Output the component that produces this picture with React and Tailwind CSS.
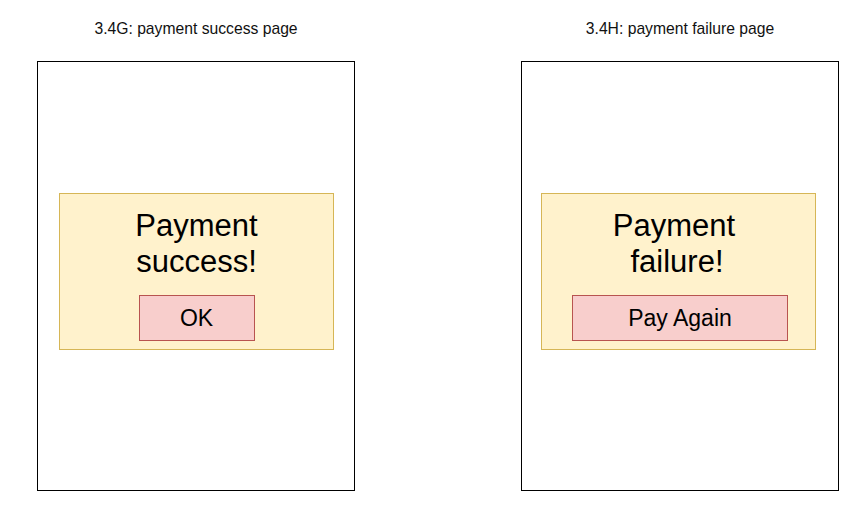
import React from 'react';

const font = { fontFamily: '"Liberation Sans", Arial, sans-serif' };

const Screen = ({ title, lines, action, padClass, buttonClass }) => (
  <div className="flex flex-col w-[318px]">
    <p className="mt-[20px] h-[18px] leading-[18px] text-[15.7px] text-[#111] text-center whitespace-nowrap">
      {title}
    </p>
    <div className={`mt-[23px] h-[430px] border border-black bg-white pt-[131px] ${padClass}`}>
      <div className="w-[275px] h-[157px] bg-[#fff2cc] border border-[#d6b656] flex flex-col items-center pt-[14px]">
        <div className="text-[31px] leading-[36px] text-black text-center">
          {lines.map(([text, cls]) => (
            <div key={text} className={cls}>{text}</div>
          ))}
        </div>
        <button
          className={`mt-[15px] h-[46px] bg-[#f8cecc] border border-[#b85450] flex items-center justify-center text-[23px] text-black ${buttonClass}`}
        >
          {action}
        </button>
      </div>
    </div>
  </div>
);

export default function App() {
  return (
    <div className="w-[866px] h-[518px] bg-white flex gap-[166px] pl-[37px] overflow-hidden" style={font}>
      <Screen
        title="3.4G: payment success page"
        lines={[['Payment', ''], ['success!', '']]}
        action="OK"
        padClass="pl-[21px]"
        buttonClass="w-[116px]"
      />
      <Screen
        title="3.4H: payment failure page"
        lines={[['Payment', 'mr-[9px]'], ['failure!', 'mr-[3px]']]}
        action="Pay Again"
        padClass="pl-[19px]"
        buttonClass="w-[216px] ml-[3px]"
      />
    </div>
  );
}
